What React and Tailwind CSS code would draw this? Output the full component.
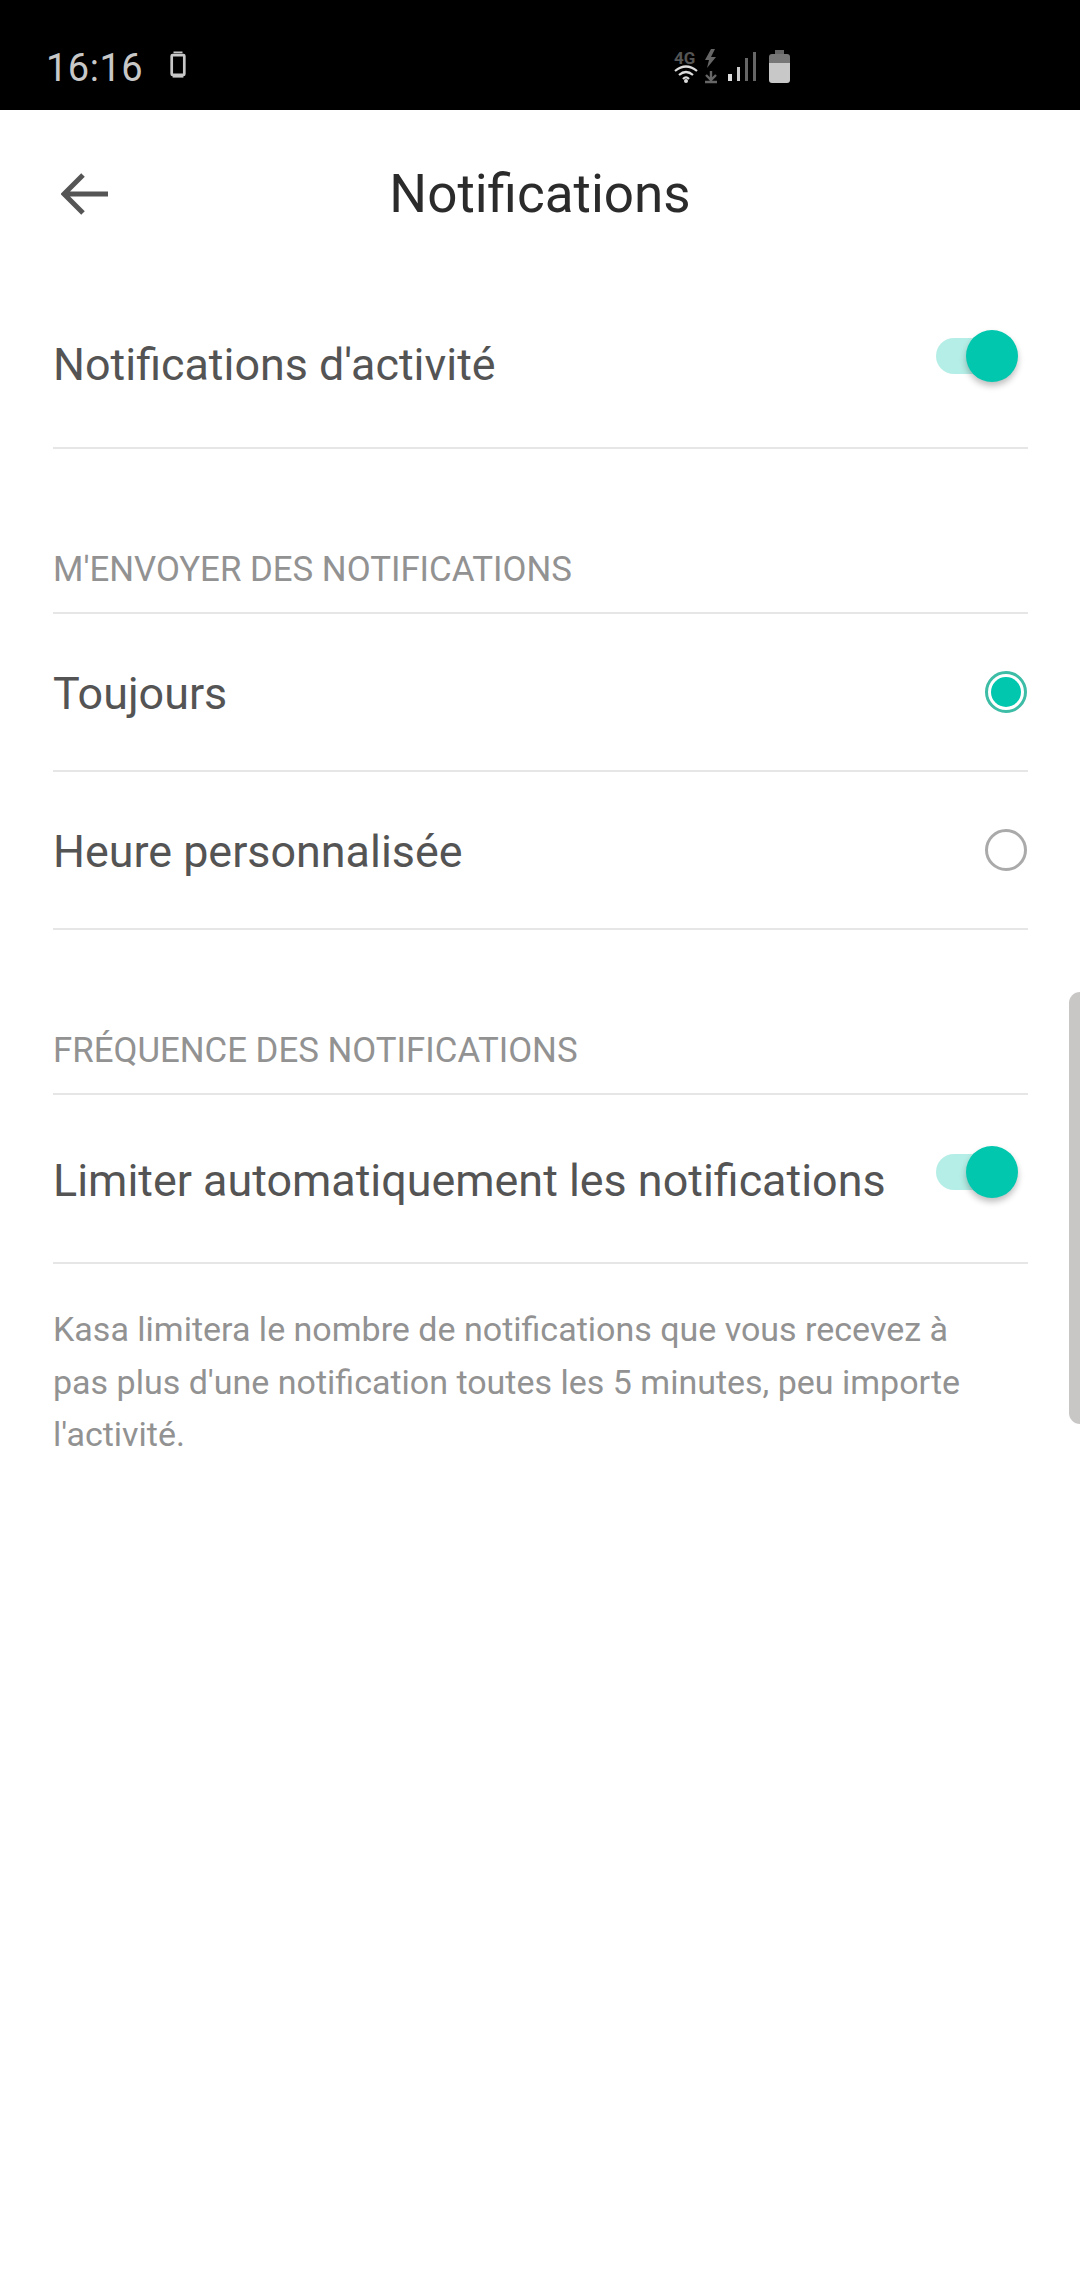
function Toggle() {
  return (
    <div className="relative w-[82px] h-[52px] mr-[10px] mb-[14px]">
      <div className="absolute left-0 top-[8px] w-[70px] h-[36px] rounded-full bg-[#b5eee6]" />
      <div className="absolute right-0 top-0 w-[52px] h-[52px] rounded-full bg-[#00c7ae] shadow-[0_4px_6px_rgba(0,0,0,0.25)]" />
    </div>
  );
}

function Divider() {
  return <div className="h-[2px] bg-[#e6e6e6]" />;
}

function Row({ label, height, children }) {
  return (
    <div className="flex items-center justify-between text-[44.85px] text-[#545454]" style={{ height }}>
      <span className="mt-[4px]">{label}</span>
      {children}
    </div>
  );
}

function SectionLabel({ children }) {
  return (
    <div className="flex items-end h-[60px] pb-[23px] text-[34.8px] leading-[40px] text-[#929292]">{children}</div>
  );
}

export default function App() {
  return (
    <div className="relative w-[1080px] h-[2280px] bg-white overflow-hidden font-['Roboto',sans-serif]">
      <div className="h-[110px] bg-black flex items-center pl-[46px] pr-[290px] justify-between">
        <div className="flex items-center gap-[26px] mt-[26px]">
          <span className="text-[38px] tracking-[0.5px] text-[#c8c8c8]">16:16</span>
          <svg width="18" height="28" viewBox="0 0 20 30" className="mt-[-6px]">
            <rect x="3" y="4" width="14" height="22" fill="none" stroke="#c8c8c8" strokeWidth="3" rx="1" />
            <rect x="5" y="0" width="10" height="2" fill="#c8c8c8" />
            <rect x="4" y="26" width="12" height="3" fill="#c8c8c8" />
          </svg>
        </div>
        <svg width="118" height="36" viewBox="0 0 118 36" className="mt-[24px]">
          <text x="2" y="15" fontSize="17" fontWeight="700" fill="#555" fontFamily="Roboto, sans-serif">4G</text>
          <path d="M3 22 Q14 13 25 22 M7 26 Q14 20 21 26 M11 30 Q14 27 17 30" fill="none" stroke="#ddd" strokeWidth="2.2" />
          <circle cx="14" cy="32" r="2" fill="#ddd" />
          <path d="M39 0 L33 11 L37 11 L35 19 L44 8 L39 8 L43 0 Z" fill="#666" />
          <path d="M39 22 V30 M34 26 L39 31 L44 26 M33 33 H45" fill="none" stroke="#666" strokeWidth="2.4" />
          <rect x="56" y="25" width="4" height="7" fill="#ddd" />
          <rect x="65" y="18" width="3" height="14" fill="#ccc" />
          <rect x="73" y="9" width="3" height="23" fill="#666" />
          <rect x="81" y="3" width="3" height="29" fill="#666" />
          <rect x="103" y="1" width="9" height="4" fill="#666" />
          <path d="M97 8 Q97 5 100 5 H115 Q118 5 118 8 V14 H97 Z" fill="#777" />
          <path d="M97 14 H118 V31 Q118 34 115 34 H100 Q97 34 97 31 Z" fill="#c8c8c8" />
        </svg>
      </div>

      <div className="relative flex items-center justify-center h-[168px]">
        <svg width="48" height="42" viewBox="0 0 48 42" className="absolute left-[61px]">
          <path d="M47 21 H4 M22 2 L3 21 L22 40" fill="none" stroke="#555" strokeWidth="5" />
        </svg>
        <span className="text-[53px] text-[#2b2b2b] mt-[2px]">Notifications</span>
      </div>

      <div className="px-[53px] mr-[-1px]">
        <Row label="Notifications d'activité" height="169px">
          <Toggle />
        </Row>
        <Divider />
        <div className="h-[103px]" />
        <SectionLabel>M'ENVOYER DES NOTIFICATIONS</SectionLabel>
        <Divider />
        <Row label="Toujours" height="156px">
          <div className="w-[42px] h-[42px] mr-[1px] rounded-full border-[3px] border-[#3dbca6] p-[3px]">
            <div className="w-full h-full rounded-full bg-[#00c7ae]" />
          </div>
        </Row>
        <Divider />
        <Row label="Heure personnalisée" height="156px">
          <div className="w-[42px] h-[42px] mr-[1px] rounded-full border-[3px] border-[#aaaaaa]" />
        </Row>
        <Divider />
        <div className="h-[103px]" />
        <SectionLabel>FRÉQUENCE DES NOTIFICATIONS</SectionLabel>
        <Divider />
        <Row label="Limiter automatiquement les notifications" height="167px">
          <Toggle />
        </Row>
        <Divider />
        <p className="pt-[39px] pr-[50px] text-[34px] leading-[52.5px] text-[#929292]">
          Kasa limitera le nombre de notifications que vous recevez à pas plus d'une notification toutes les 5 minutes, peu importe l'activité.
        </p>
      </div>

      <div className="absolute right-0 top-[992px] w-[11px] h-[432px] rounded-l-[14px] bg-[#c9c6c6]" />
    </div>
  );
}
